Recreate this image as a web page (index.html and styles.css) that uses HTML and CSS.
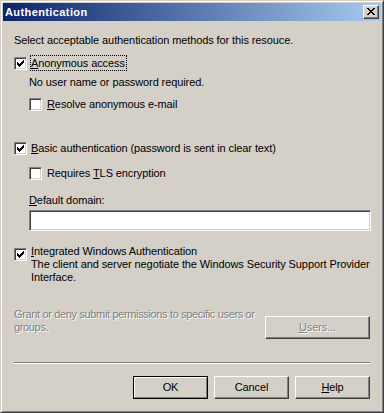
FILE: index.html
```html
<!DOCTYPE html>
<html>
<head>
<meta charset="utf-8">
<link rel="stylesheet" href="styles.css">
</head>
<body>
<div class="window">
  <div class="titlebar">
    <span class="title">Authentication</span>
    <span class="close">
      <svg width="8" height="7" viewBox="0 0 8 7" shape-rendering="crispEdges"><path d="M0 0h2v1h-2zM6 0h2v1h-2zM1 1h2v1h-2zM5 1h2v1h-2zM2 2h4v1h-4zM3 3h2v1h-2zM2 4h4v1h-4zM1 5h2v1h-2zM5 5h2v1h-2zM0 6h2v1h-2zM6 6h2v1h-2z" fill="#000"/></svg>
    </span>
  </div>
  <div class="content">
    <p class="intro">Select acceptable authentication methods for this resouce.</p>

    <div class="check-row r1">
      <span class="cb checked"><svg width="9" height="9" viewBox="0 0 9 9" shape-rendering="crispEdges"><path d="M1 3h1v3h-1zM2 4h1v3h-1zM3 5h1v3h-1zM4 4h1v3h-1zM5 3h1v3h-1zM6 2h1v3h-1zM7 1h1v3h-1z" fill="#000"/></svg></span>
      <span class="label focus"><u>A</u>nonymous access</span>
    </div>
    <p class="note">No user name or password required.</p>
    <div class="check-row sub r2">
      <span class="cb"></span>
      <span class="label"><u>R</u>esolve anonymous e-mail</span>
    </div>

    <div class="check-row r3">
      <span class="cb checked"><svg width="9" height="9" viewBox="0 0 9 9" shape-rendering="crispEdges"><path d="M1 3h1v3h-1zM2 4h1v3h-1zM3 5h1v3h-1zM4 4h1v3h-1zM5 3h1v3h-1zM6 2h1v3h-1zM7 1h1v3h-1z" fill="#000"/></svg></span>
      <span class="label"><u>B</u>asic authentication (password is sent in clear text)</span>
    </div>
    <div class="check-row sub r4">
      <span class="cb"></span>
      <span class="label">Requires <u>T</u>LS encryption</span>
    </div>
    <p class="field-label"><u>D</u>efault domain:</p>
    <div class="textbox"></div>

    <div class="check-row multi r5">
      <span class="cb checked"><svg width="9" height="9" viewBox="0 0 9 9" shape-rendering="crispEdges"><path d="M1 3h1v3h-1zM2 4h1v3h-1zM3 5h1v3h-1zM4 4h1v3h-1zM5 3h1v3h-1zM6 2h1v3h-1zM7 1h1v3h-1z" fill="#000"/></svg></span>
      <div class="label-block">
        <span class="label"><u>I</u>ntegrated Windows Authentication</span>
        <p class="desc">The client and server negotiate the Windows Security Support Provider<br>Interface.</p>
      </div>
    </div>

    <div class="grant-row">
      <p class="disabled grant-text">Grant or deny submit permissions to specific users or<br>groups.</p>
      <span class="btn users disabled"><u>U</u>sers...</span>
    </div>

    <div class="separator"></div>

    <div class="buttons">
      <span class="btn default"><span class="btn-inner">OK</span></span>
      <span class="btn">Cancel</span>
      <span class="btn"><u>H</u>elp</span>
    </div>
  </div>
</div>
</body>
</html>
```

FILE: styles.css
```css
* { box-sizing: border-box; }
html, body { margin: 0; padding: 0; background: #d4d0c8; }
body {
  font-family: "Liberation Sans", Arial, sans-serif;
  font-size: 11px;
  line-height: 13px;
  letter-spacing: -0.1px;
  color: #000;
}
p { margin: 0; white-space: nowrap; }
u { text-decoration: underline; text-underline-offset: 1px; }

.window {
  width: 384px;
  height: 413px;
  overflow: hidden;
  background: #d4d0c8;
  border: 1px solid;
  border-color: #d4d0c8 #404040 #404040 #d4d0c8;
  box-shadow: inset 1px 1px #fff, inset -1px -1px #808080;
  padding: 2px;
  display: flex;
  flex-direction: column;
}

.titlebar {
  height: 18px;
  flex: none;
  display: flex;
  align-items: flex-start;
  justify-content: space-between;
  background: linear-gradient(to right, #0a246a, #a6caf0);
  padding-left: 2px;
}
.title {
  color: #fff;
  font-weight: bold;
  font-size: 11px;
  letter-spacing: 0.4px;
  line-height: 18px;
}
.close {
  width: 16px;
  height: 14px;
  margin: 2px 2px 0 0;
  background: #d4d0c8;
  border: 1px solid;
  border-color: #fff #404040 #404040 #fff;
  box-shadow: inset -1px -1px #808080;
  display: flex;
  align-items: center;
  justify-content: center;
  padding: 0 1px 1px 0;
}
.close svg { display: block; }

.content {
  padding: 0 10px 0 11px;
  display: flex;
  flex-direction: column;
}

.intro { margin-top: 13px; }

.check-row {
  display: flex;
  align-items: center;
  gap: 4px;
  height: 13px;
  flex: none;
}
.check-row.sub { margin-left: 15px; gap: 5px; }

.cb {
  width: 13px;
  height: 13px;
  flex: none;
  background: #fff;
  border: 1px solid;
  border-color: #808080 #fff #fff #808080;
  box-shadow: inset 1px 1px #404040, inset -1px -1px #d4d0c8;
  padding: 1px;
}
.cb svg { display: block; }

.label { white-space: nowrap; }
.focus {
  border: 1px dotted #000;
  padding: 1px 1px 0 0;
  margin: -2px 0 -1px -1px;
}

.r1 { margin-top: 10px; }
.note { margin-top: 6px; margin-left: 15px; }
.r2 { margin-top: 9px; }
.r3 { margin-top: 31px; }
.r4 { margin-top: 12px; }
.field-label { margin-top: 14px; margin-left: 15px; }

.textbox {
  margin-top: 3px;
  margin-left: 15px;
  height: 21px;
  flex: none;
  background: #fff;
  border: 1px solid;
  border-color: #808080 #fff #fff #808080;
  box-shadow: inset 1px 1px #404040, inset -1px -1px #d4d0c8;
}

.check-row.multi {
  height: auto;
  align-items: flex-start;
  margin-top: 14px;
  gap: 4px;
}
.multi .cb { margin-top: 3px; }
.label-block { display: flex; flex-direction: column; }

.grant-row {
  margin-top: 24px;
  display: flex;
  justify-content: space-between;
  align-items: flex-start;
}
.grant-text { letter-spacing: -0.35px; }
.disabled {
  color: #808080;
  text-shadow: 1px 1px 0 #fff;
}

.btn {
  width: 75px;
  height: 23px;
  flex: none;
  display: flex;
  align-items: center;
  justify-content: center;
  background: #d4d0c8;
  border: 1px solid;
  border-color: #fff #404040 #404040 #fff;
  box-shadow: inset -1px -1px #808080, inset 1px 1px #d4d0c8;
  padding-bottom: 1px;
}
.btn.users {
  width: 105px;
  margin-top: 8px;
  margin-right: 1px;
}
.btn.default {
  border: 1px solid #000;
  box-shadow: none;
  padding: 0;
}
.btn-inner {
  flex: 1;
  align-self: stretch;
  display: flex;
  align-items: center;
  justify-content: center;
  border: 1px solid;
  border-color: #fff #808080 #808080 #fff;
  padding-bottom: 1px;
}

.separator {
  margin-top: 23px;
  height: 2px;
  flex: none;
  border-top: 1px solid #808080;
  border-bottom: 1px solid #fff;
  margin-right: 1px;
}

.buttons {
  margin-top: 12px;
  display: flex;
  justify-content: flex-end;
  gap: 6px;
  margin-right: 1px;
}
```
